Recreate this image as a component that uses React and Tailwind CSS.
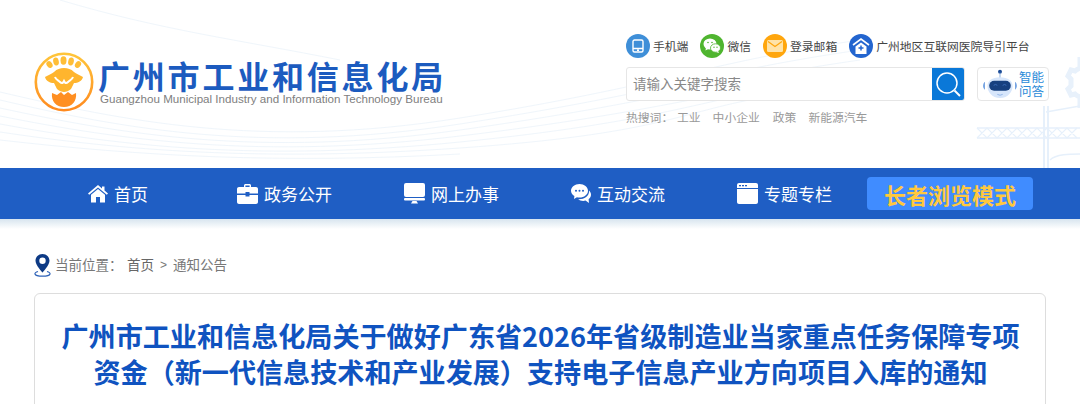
import React from 'react';

const CJK = "font-['Noto_Sans_CJK_SC','Liberation_Sans',sans-serif]";

const HeaderDecor = () => (
  <svg className="absolute inset-0 pointer-events-none" width="1080" height="168" viewBox="0 0 1080 168" fill="none">
    <g stroke="#dbe9f7" strokeWidth="0.7" opacity="0.6">
      <path d="M0 92C120 120 260 150 460 118S720 60 860 40" />
      <path d="M0 100C120 128 260 155 460 124S720 70 860 50" />
      <path d="M0 108C120 134 260 158 460 130S720 80 860 60" />
      <path d="M0 116C120 140 260 160 460 136S720 90 860 70" />
      <path d="M0 124C120 146 260 162 460 142S700 100 800 84" />
      <path d="M0 132C120 150 260 162 460 148S680 112 760 98" />
      <path d="M0 140C140 156 280 164 460 154" />
      <path d="M60 0C160 30 240 40 340 60" />
    </g>
    {/* gear, mostly cut off by the right edge */}
    <path d="M1080 57v11c-3 1-4 2-5 3l-4-1-3 6 3 3v7l-3 3 3 6 4-1c1 1 2 2 5 3v11" stroke="#e8f1fb" strokeWidth="5" fill="none" />
    {/* crane */}
    <g stroke="#e6f0fb" fill="none">
      <path d="M1044 106v62M1048 106v62" strokeWidth="2" />
      <path d="M977 128h103M977 138h103" strokeWidth="1.500" />
      <path d="M977 128l10 10 10-10 10 10 10-10 10 10 10-10 10 10 10-10 10 10 10-10M977 138l10-10 10 10 10-10 10 10 10-10 10 10 10-10 10 10 10-10 10 10" strokeWidth="1.200" />
      <path d="M1046 112l34-6M1050 160c6-6 20-6 30-6" strokeWidth="1.500" />
    </g>
  </svg>
);

const Logo = () => (
  <svg width="60" height="60" viewBox="0 0 60 60" className="shrink-0">
    <defs>
      <linearGradient id="logoFill" x1="0" y1="0" x2="0" y2="1">
        <stop offset="0" stopColor="#ffc53a" />
        <stop offset="1" stopColor="#ff8a1f" />
      </linearGradient>
    </defs>
    <circle cx="30" cy="30" r="28.2" fill="#fff" stroke="url(#logoFill)" strokeWidth="2.600" />
    <g fill="#ffbe37">
      <ellipse cx="15.500" cy="12.500" rx="2.800" ry="3.600" transform="rotate(-35 15.500 12.500)" />
      <ellipse cx="22" cy="9.500" rx="2.800" ry="4" transform="rotate(-12 22 9.500)" />
      <ellipse cx="29.500" cy="8.500" rx="3" ry="4.200" />
      <ellipse cx="37" cy="9.500" rx="2.800" ry="4" transform="rotate(12 37 9.500)" />
      <ellipse cx="44" cy="12.500" rx="2.800" ry="3.600" transform="rotate(35 44 12.500)" />
    </g>
    <path d="M11 25c3-2 7-3 9-5 3-3 6-4 10-4s7 1 10 4c2 2 6 3 9 5-1 4-5 6-9 6l-3 6c-2 2-5 3-7 3s-5-1-7-3l-3-6c-4 0-8-2-9-6z" fill="#ffb52e" />
    <path d="M21 25c1 3 3 3 5 5 2 2 3 1 4-1 1 2 2 3 4 1s4-2 5-5" stroke="#fff" strokeWidth="2" fill="none" />
    <path d="M18 41l5 2 4-3 3 3 4-3 4 3 4-2c1 8-4 14-12 14s-13-6-12-14z" fill="#ff8f22" />
  </svg>
);

const TopLink = ({ bg, label, icon }) => (
  <div className="flex items-center gap-[3px]">
    <span className={`flex h-6 w-6 items-center justify-center rounded-full ${bg}`}>{icon}</span>
    <span className="text-[11.800px] leading-none text-[#444]">{label}</span>
  </div>
);

const Robot = () => (
  <svg width="36" height="30" viewBox="0 0 40 33">
    <circle cx="20" cy="3" r="2.200" fill="#1b4a96" />
    <path d="M20 4v6" stroke="#7ea6dd" strokeWidth="1" />
    <path d="M6 19c0-6 5-10 14-10s14 4 14 10-5 13-14 13S6 25 6 19z" fill="#d7e6fb" />
    <rect x="8" y="13" width="24" height="11" rx="5.500" fill="#17407f" />
    <path d="M13 18q2-2 4 0M23 18q2-2 4 0" stroke="#3b6dbb" strokeWidth="1" fill="none" />
    <path d="M3 14c-2 2-2 7 0 9zM37 14c2 2 2 7 0 9z" fill="#3f7fd6" />
    <path d="M17 28q3 2 6 0" stroke="#8fb2e6" strokeWidth="1" fill="none" />
  </svg>
);

const navItems = [
  {
    label: '首页',
    width: 'w-[149px]',
    gap: 'gap-[6px]',
    icon: (
      <svg width="20" height="18" viewBox="0 0 20 18" fill="#fff">
        <path d="M10 0L0 8.500l1.200 1.300L10 2.500l8.800 7.300L20 8.500 16.500 5.500V1.500H14V3.400z" />
        <path d="M10 4L3 9.800V17.500H8V12h4v5.500h5V9.800z" />
      </svg>
    ),
  },
  {
    label: '政务公开',
    width: 'w-[167px]',
    gap: 'gap-[6px]',
    icon: (
      <svg width="21" height="20" viewBox="0 0 21 20" fill="#fff">
        <path d="M7 3V1.500C7 .7 7.700 0 8.500 0h4C13.300 0 14 .7 14 1.500V3h-1.400V1.400H8.400V3z" />
        <path d="M2 3h17c1.100 0 2 .9 2 2v4.500H12.500V8h-4v1.500H0V5c0-1.100.9-2 2-2z" />
        <path d="M0 11h8.500v1.500h4V11H21v7c0 1.100-.9 2-2 2H2c-1.100 0-2-.9-2-2z" />
      </svg>
    ),
  },
  {
    label: '网上办事',
    width: 'w-[167px]',
    gap: 'gap-[6px]',
    icon: (
      <svg width="21" height="21" viewBox="0 0 21 21" fill="#fff">
        <rect x="0" y="0" width="21" height="14" rx="2" />
        <rect x="0" y="15" width="21" height="2.500" rx="1" />
        <path d="M8.500 18h4l1.500 2.500H7z" />
      </svg>
    ),
  },
  {
    label: '互动交流',
    width: 'w-[166px]',
    gap: 'gap-[6px]',
    icon: (
      <svg width="20" height="20" viewBox="0 0 20 20" fill="#fff">
        <path d="M8.500 0C13.200 0 17 3 17 6.800s-3.800 6.800-8.500 6.800c-.9 0-1.800-.1-2.600-.3L3 15l.4-3C1.300 10.800 0 8.900 0 6.800 0 3 3.800 0 8.500 0z" />
        <path d="M18 6.500c1.300 1.200 2 2.700 2 4.300 0 1.800-.9 3.400-2.400 4.500l.4 3.700-3.500-2.400c-.7.2-1.500.3-2.300.3-2 0-3.800-.6-5-1.700 5 .5 11.500-2.700 10.800-8.700z" />
        <g fill="#1f5ec4"><circle cx="5" cy="6.800" r="1" /><circle cx="8.500" cy="6.800" r="1" /><circle cx="12" cy="6.800" r="1" /></g>
      </svg>
    ),
  },
  {
    label: '专题专栏',
    width: 'w-[130px]',
    gap: 'gap-[6px]',
    icon: (
      <svg width="21" height="21" viewBox="0 0 21 21" fill="#fff">
        <path d="M2 0h17c1.100 0 2 .9 2 2v3H0V2C0 .9.900 0 2 0z" />
        <path d="M0 6h21v13c0 1.100-.9 2-2 2H2c-1.100 0-2-.9-2-2z" />
        <g fill="#1f5ec4"><rect x="2" y="2" width="2" height="1.300" /><rect x="5" y="2" width="2" height="1.300" /><rect x="8" y="2" width="2" height="1.300" /></g>
      </svg>
    ),
  },
];

export default function App() {
  return (
    <div className={`h-[404px] w-[1080px] overflow-hidden bg-white ${CJK}`}>
      {/* header */}
      <header className="relative flex h-[168px] items-start justify-between pl-[34px] pr-[31px]">
        <HeaderDecor />
        <div className="relative mt-[52px] flex items-start gap-[4px]">
          <Logo />
          <div className="mt-[5px]">
            <h1 className="text-[32px] font-bold leading-[36px] tracking-[2.800px] whitespace-nowrap text-[#1c5bbf]">广州市工业和信息化局</h1>
            <p className="ml-[2px] font-['Liberation_Sans',sans-serif] text-[11.600px] leading-[12px] whitespace-nowrap text-[#808080]">Guangzhou Municipal Industry and Information Technology Bureau</p>
          </div>
        </div>

        <div className="relative mt-[34px] w-[423px]">
          <div className="flex items-center gap-3">
            <TopLink
              bg="bg-[#3f8fd8]"
              label="手机端"
              icon={
                <svg width="14" height="14" viewBox="0 0 14 14" fill="none" stroke="#fff" strokeWidth="1.400">
                  <rect x="2" y="1" width="10" height="12" rx="1.500" />
                  <path d="M2 9.500h10M6 11.300h2" />
                </svg>
              }
            />
            <TopLink
              bg="bg-[#4fb52f]"
              label="微信"
              icon={
                <svg width="18" height="16" viewBox="0 0 18 16" fill="#fff">
                  <ellipse cx="7" cy="6" rx="6.500" ry="5.500" />
                  <path d="M3 9.500L2.500 12.500 6 10.500z" />
                  <ellipse cx="12.500" cy="10" rx="5" ry="4.200" stroke="#4fb52f" strokeWidth="0.800" />
                  <path d="M15 13l1 2-3-1z" />
                  <g fill="#4fb52f"><circle cx="5" cy="4.500" r="0.800" /><circle cx="9" cy="4.500" r="0.800" /><circle cx="11" cy="9.300" r="0.700" /><circle cx="14" cy="9.300" r="0.700" /></g>
                </svg>
              }
            />
            <TopLink
              bg="bg-[#ffa60d]"
              label="登录邮箱"
              icon={
                <svg width="16" height="12" viewBox="0 0 16 12">
                  <rect width="16" height="12" rx="1.500" fill="#ffe3a8" />
                  <path d="M1 1.500l7 5 7-5" stroke="#ffa60d" strokeWidth="1.200" fill="none" />
                </svg>
              }
            />
            <TopLink
              bg="bg-[#2365cf]"
              label="广州地区互联网医院导引平台"
              icon={
                <svg width="18" height="17" viewBox="0 0 18 17" fill="none">
                  <path d="M1 7l8-6 8 6" stroke="#fff" strokeWidth="1.600" />
                  <path d="M3.500 8.500L9 4.500l5.500 4V16h-11z" fill="#fff" />
                  <path d="M9 7.500v5M6.500 10h5" stroke="#2365cf" strokeWidth="1.500" />
                </svg>
              }
            />
          </div>

          <div className="mt-[9px] flex items-stretch gap-3">
            <div className="flex h-[34px] w-[339px] overflow-hidden rounded-[3px] border border-[#e6e6e6] bg-white">
              <div className="flex-1 pl-[6px] text-[13.500px] leading-[30px] text-[#888]">请输入关键字搜索</div>
              <div className="flex w-[32px] items-center justify-center bg-[#0a78d8]">
                <svg width="28" height="28" viewBox="0 0 28 28" fill="none" stroke="#fff" strokeWidth="1.500">
                  <circle cx="13" cy="13" r="10" />
                  <path d="M20.500 20.500L26 26" strokeWidth="2" />
                </svg>
              </div>
            </div>
            <div className="flex h-[34px] w-[72px] items-center rounded-[4px] border border-[#e6e6e6] bg-white pl-[4px]">
              <Robot />
              <span className="ml-[1px] w-[26px] text-[12.500px] leading-[14px] text-[#2a8ad8]">智能问答</span>
            </div>
          </div>

          <div className="mt-[8px] flex items-center text-[11.800px] leading-[16px] text-[#999]">
            <span className="w-[51px]">热搜词：</span>
            <span className="mr-[12px]">工业</span>
            <span className="mr-[13px]">中小企业</span>
            <span className="mr-[12px]">政策</span>
            <span>新能源汽车</span>
          </div>
        </div>
      </header>

      {/* nav */}
      <nav className="flex h-[51px] items-center bg-[#1f5ec4] pl-[88px]">
        {navItems.map((item) => (
          <div key={item.label} className={`flex items-center ${item.width} ${item.gap}`}>
            {item.icon}
            <span className="text-[17px] leading-none text-white">{item.label}</span>
          </div>
        ))}
        <div className="flex h-[33px] w-[166px] items-center justify-center rounded-[4px] bg-[#408cff] text-[22px] font-bold leading-none text-[#ffc83d]">
          长者浏览模式
        </div>
      </nav>

      {/* breadcrumb */}
      <div className="bg-gradient-to-b from-[#d8e5ef] to-white to-[10px] px-[34px] pt-[34px]">
        <div className="flex h-[24px] items-center text-[13.500px] leading-none text-[#777]">
          <svg width="17" height="24" viewBox="0 0 17 24" className="mr-[4px]">
            <path d="M8.500 1C4.300 1 1.500 4.100 1.500 7.800c0 4.700 7 11.700 7 11.700s7-7 7-11.700C15.500 4.100 12.700 1 8.500 1zm0 10a3.200 3.200 0 110-6.400 3.200 3.200 0 010 6.400z" fill="#0d3a85" />
            <path d="M4 18.500c-2 .6-3.300 1.400-3 2.500.4 1.300 3.500 2.200 7.500 2.200s7.100-.9 7.500-2.200c.3-1.100-1-1.900-3-2.500" fill="none" stroke="#2f63b8" strokeWidth="1.200" />
          </svg>
          <span className="w-[72px]">当前位置：</span>
          <span className="text-[#666]">首页</span>
          <span className="mx-[6px] font-['Liberation_Sans',sans-serif] text-[12px]">&gt;</span>
          <span>通知公告</span>
        </div>

        {/* article card */}
        <div className="mt-[16px] h-[200px] rounded-t-[6px] border border-[#dddddd] pl-[21px] pr-[20px] pt-[24px]">
          <h2 className="text-center text-[27.100px] font-bold leading-[36px] text-[#0f53c0]">
            广州市工业和信息化局关于做好广东省2026年省级制造业当家重点任务保障专项
            <br />
            资金（新一代信息技术和产业发展）支持电子信息产业方向项目入库的通知
          </h2>
        </div>
      </div>
    </div>
  );
}
